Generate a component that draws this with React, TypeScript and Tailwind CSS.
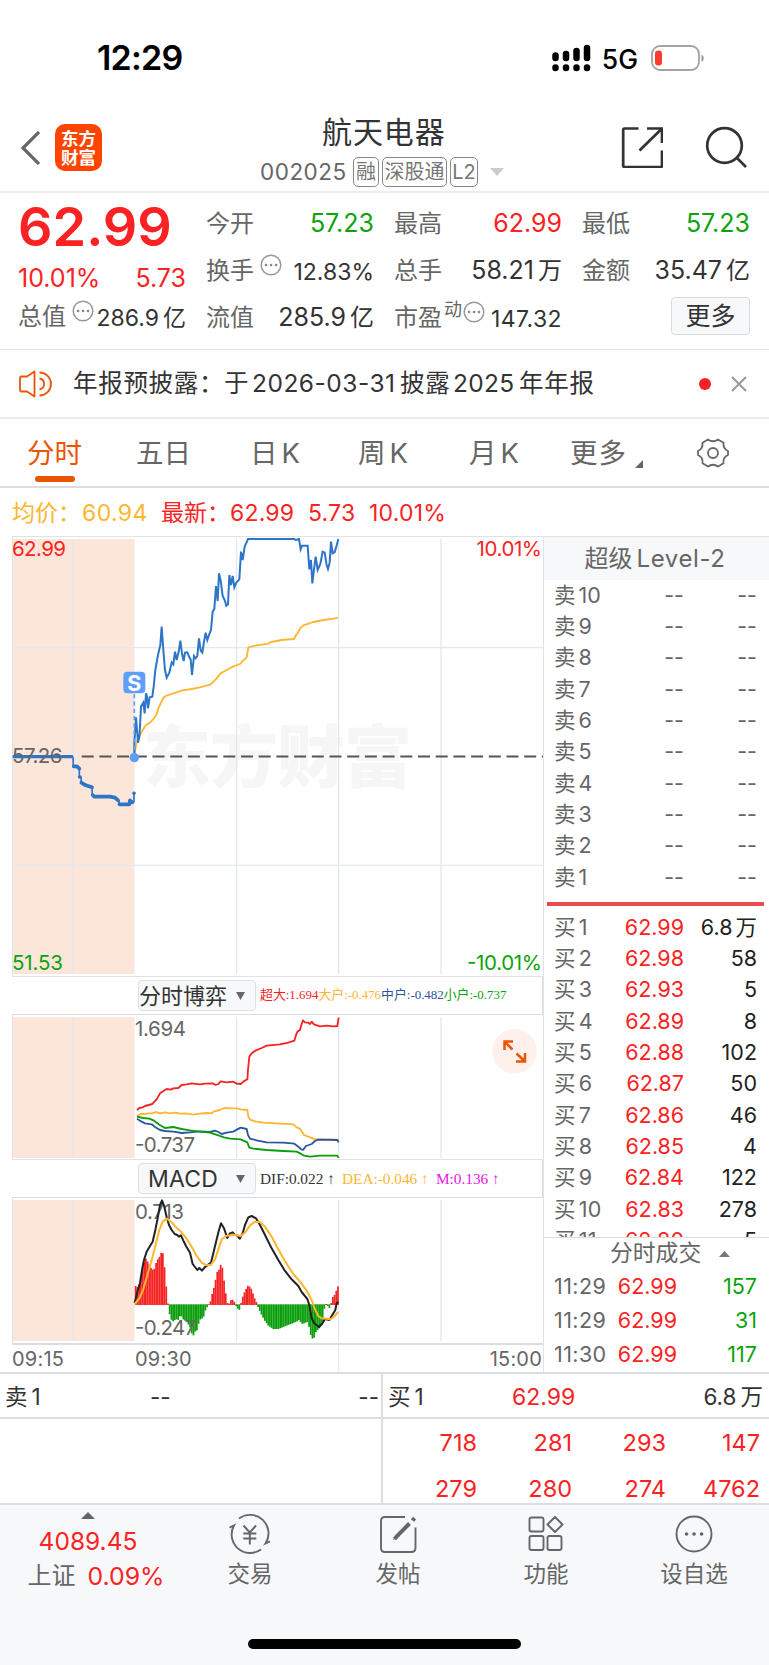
import {ReactNode} from 'react'

const asks = [10, 9, 8, 7, 6, 5, 4, 3, 2, 1];

const bids = [
  ['1', '62.99', '6.8万'],
  ['2', '62.98', '58'],
  ['3', '62.93', '5'],
  ['4', '62.89', '8'],
  ['5', '62.88', '102'],
  ['6', '62.87', '50'],
  ['7', '62.86', '46'],
  ['8', '62.85', '4'],
  ['9', '62.84', '122'],
  ['10', '62.83', '278'],
  ['11', '62.80', '5'],
];

const trades = [
  ['11:29', '62.99', '157'],
  ['11:29', '62.99', '31'],
  ['11:30', '62.99', '117'],
];

const PRICE = '403,680 403,640 408,562 411,600 414,638 418,620 420,590 423,530 430,518 434,550 438,490 441,500 444,535 449,502 457,500 461,470 466,420 474,375 481,345 485,290 490,360 495,420 500,443 508,428 515,397 520,403 525,365 530,390 537,360 541,332 546,370 551,393 555,368 562,367 568,382 572,388 576,435 582,378 587,385 592,378 597,325 602,362 607,368 612,335 617,308 622,330 628,312 633,300 638,245 643,237 648,168 653,213 657,130 662,152 668,198 674,210 679,227 684,223 688,135 693,165 698,138 703,172 709,158 718,148 723,65 728,90 734,50 744,27 882,27 888,30 897,27 902,58 906,47 923,47 928,118 933,90 937,160 942,118 947,80 953,120 961,102 968,65 974,68 980,105 984,117 989,98 993,35 998,70 1004,66 1009,50 1015,27';
const AVERAGE = '403,675 410,635 420,615 430,597 438,585 450,578 462,565 470,553 475,535 482,520 490,504 497,498 520,490 547,481 575,477 600,472 632,463 650,445 662,430 680,420 700,409 720,402 727,394 740,382 745,353 760,348 805,341 812,336 830,333 845,330 882,327 888,315 893,310 900,295 910,286 940,276 970,270 1000,266 1014,263';
const AUCTION = '219,680 220,709 232,712 238,718 238,741 243,742 244,758 255,762 265,769 276,772 277,795 283,800 330,800 345,804 357,812 358,823 388,823 390,810 397,817 402,815 402,790';

const FLOW_XL = '411,420 418,414 428,412 435,408 457,402 470,388 480,370 495,360 500,357 512,359 520,355 535,354 545,345 560,343 575,340 600,343 615,341 638,340 647,345 655,342 662,334 680,337 700,335 710,341 722,342 730,335 742,328 744,300 748,260 755,250 768,241 785,234 800,227 840,223 865,218 883,212 888,195 893,184 900,180 905,162 909,151 915,157 925,158 930,162 935,155 942,163 960,169 980,167 1000,169 1012,168 1016,143';
const FLOW_L = '411,438 425,431 435,433 445,430 457,430 467,426 480,430 495,427 510,430 525,428 540,431 558,430 580,434 600,431 620,429 635,430 642,424 660,420 672,414 690,415 710,415 722,418 742,420 745,440 750,449 765,454 790,458 830,460 880,463 890,472 900,476 912,495 925,500 945,508 980,508 1016,509';
const FLOW_M = '411,446 425,455 435,460 455,463 465,471 480,480 495,483 520,485 545,489 570,487 600,484 630,486 645,482 655,486 665,492 680,488 700,485 712,478 722,473 740,477 744,495 750,506 770,511 800,517 850,518 883,521 895,530 902,537 909,540 918,528 935,522 945,513 955,509 1012,510 1016,517';
const FLOW_S = '411,440 430,444 448,446 462,452 478,464 495,474 520,471 545,477 570,481 600,485 630,488 655,496 672,502 690,506 722,508 742,517 748,533 760,536 800,540 850,543 890,545 902,551 912,557 930,560 960,557 1012,557 1016,563';

const DIF = '404,1000 412,965 420,940 426,900 432,870 440,845 450,828 458,815 466,780 473,745 480,705 486,691 493,710 500,742 507,765 515,780 524,792 532,795 537,800 543,796 550,812 558,828 570,848 578,882 592,900 598,894 606,902 614,892 622,886 633,878 640,850 650,808 657,780 663,760 672,775 682,804 690,790 698,787 704,794 712,797 719,806 728,790 735,765 745,742 755,738 768,745 780,765 795,795 815,835 835,870 855,903 875,928 895,948 905,966 922,987 928,1005 935,1045 943,1060 957,1071 966,1062 975,1047 988,1050 997,1035 1006,1020 1010,1000 1016,996';
const DEA = '404,1002 418,985 430,958 442,915 455,870 468,820 478,780 488,755 500,746 515,757 530,774 545,787 560,806 575,830 590,858 605,878 620,886 633,884 645,868 655,838 665,808 678,798 700,794 722,798 735,788 750,766 765,755 780,756 795,770 815,800 835,838 855,874 880,912 900,935 920,962 935,990 945,1018 955,1038 965,1045 980,1046 992,1048 1004,1038 1014,1026';

// turning points of the histogram, [x, height]
const HIST = [
  [407, 55], [415, 50], [422, 80], [430, 120], [437, 138], [445, 125], [455, 105], [462, 103], [470, 130], [480, 145], [487, 164],
  [492, 130], [497, 75], [502, 15], [507, -18], [512, -42], [520, -50], [527, -42], [535, -45], [542, -28], [548, -42],
  [560, -50], [572, -70], [578, -97], [585, -80], [592, -75], [598, -45], [610, -38], [618, -10], [625, -2], [632, 10],
  [638, 38], [645, 60], [650, 100], [655, 92], [660, 122], [668, 108], [674, 55], [680, 15], [685, -8], [690, 12],
  [700, 14], [706, 1], [711, -9], [720, -16], [725, 15], [735, 40], [745, 58], [755, 45], [763, 20], [770, 5],
  [775, -8], [785, -30], [795, -48], [805, -62], [820, -72], [835, -72], [850, -66], [870, -58], [890, -50], [898, -44],
  [905, -57], [915, -54], [925, -50], [930, -85], [940, -106], [948, -80], [960, -68], [968, -50], [972, -15], [977, 2],
  [983, -3], [988, -10], [992, -3], [997, 20], [1005, 30], [1012, 50], [1018, 62],
];

const bars = Array.from({length: 120}, (_, i) => {
  const x = 407 + i * 5.1;
  const k = Math.max(1, HIST.findIndex((p) => p[0] >= x));
  const [x0, h0] = HIST[k - 1];
  const [x1, h1] = HIST[k];
  return {x, h: h0 + ((h1 - h0) * (x - x0)) / (x1 - x0)};
});

function Label({x, y, w, size = 21, fill = '#666', end, children}: {x: number, y: number, w: number, size?: number, fill?: string, end?: boolean, children: string}) {
  return (
    <text x={x} y={y} fontSize={size} fill={fill} textLength={w} textAnchor={end ? 'end' : 'start'}>{children}</text>
  )
}

function Dots({className}: {className?: string}) {
  return (
    <svg viewBox="0 0 22 22" className={'h-[22px] w-[22px] shrink-0 ' + className} fill="none">
      <circle cx="11" cy="11" r="9.8" stroke="#999" strokeWidth="1.5"/>
      <path d="M6 11h.1M11 11h.1M16 11h.1" stroke="#888" strokeWidth="2.6" strokeLinecap="round"/>
    </svg>
  )
}

function Badge({className, children}: {className: string, children: ReactNode}) {
  return (
    <span className={'flex h-[30px] items-center justify-center rounded-[5px] border-[1.5px] border-[#888] text-[20px] leading-none whitespace-nowrap text-[#777] ' + className}>{children}</span>
  )
}

function Cell({label, value, unit, color = 'text-[#333]', children}: {label: string, value: string, unit?: string, color?: string, children?: ReactNode}) {
  return (
    <div className="flex h-[47px] w-[168px] items-center">
      <span className="text-[24px] text-[#666]">{label}</span>
      {children}
      <span className={'ml-auto whitespace-nowrap ' + color}>{value}{unit && <span className="ml-[4px] text-[24px]">{unit}</span>}</span>
    </div>
  )
}

function BidRow({row}: {row: string[]}) {
  return (
    <div className="flex h-[31.3px] shrink-0 items-center">
      <span className="w-[60px] tracking-[0.2px] text-[#666]">买<span className="ml-[3px]">{row[0]}</span></span>
      <span className="w-[70px] text-right text-[#fa2222]">{row[1]}</span>
      <span className="ml-auto text-[#222]">{row[2].replace('万', '')}{row[2].endsWith('万') && <span className="ml-[3px]">万</span>}</span>
    </div>
  )
}

function Plot({y, children}: {y: number, children: ReactNode}) {
  return (
    <g transform={`translate(0 ${y}) scale(.33333)`} fill="none" strokeLinejoin="round">{children}</g>
  )
}

function PriceChart() {
  return (
    <svg viewBox="12 536 531 441" className="block h-[441px] w-[531px]">
      <rect x="12.5" y="539" width="122" height="435" fill="#fce6da"/>
      <text x="143" y="782" fontSize="68" fontWeight="900" fill="#f6f6f6" textLength="269">东方财富</text>
      <path d="M73 539V974M236.6 539V974M338.6 539V974M441 539V974M12 647.7H543M12 865.4H543" stroke="#e3e7ef" strokeWidth="1.3"/>
      <path d="M12 536.5H544M12 976.5H544M12.5 536V977" stroke="#dfe3e8"/>
      <Label x={12} y={556} w={54} size={20.5} fill="#fa2222">62.99</Label>
      <Label x={542} y={556} w={65.5} size={20.5} fill="#fa2222" end>10.01%</Label>
      <Label x={12} y={969.5} w={51} size={20.5} fill="#0ba30b">51.53</Label>
      <Label x={542} y={969.5} w={75} size={20.5} fill="#0ba30b" end>-10.01%</Label>
      <path d="M81.7 756.5H544" stroke="#555" strokeWidth="1.8" strokeDasharray="12 5.7"/>
      <Plot y={530}>
        <path d="M38 680H219" stroke="#2e75c8" strokeWidth="10"/>
        <polyline points={AUCTION} stroke="#2e75c8" strokeWidth="5"/>
        <path d="M221 709H231L238 716M239 741h1M244 758L255 765L276 772M278 795L283 800H330L345 803L354 811M358 823H388L390 811L397 817M402 790h.1" stroke="#2e75c8" strokeWidth="11" strokeLinecap="round"/>
        <polyline points={AVERAGE} stroke="#fdb62f" strokeWidth="5.5"/>
        <polyline points={PRICE} stroke="#2e75c8" strokeWidth="6" strokeLinejoin="miter"/>
        <path d="M403 492V680" stroke="#5b9df8" strokeWidth="5" strokeDasharray="13 9"/>
        <rect x="370" y="425" width="66" height="65" rx="12" fill="#5e9ffa"/>
        <circle cx="403" cy="683" r="14" fill="#5e9ffa"/>
      </Plot>
      <text x="134.3" y="690.5" fontSize="21.5" fontWeight="700" fill="#fff" textAnchor="middle">S</text>
      <Label x={12} y={763} w={50.5} size={20.5}>57.26</Label>
    </svg>
  )
}

function FlowChart() {
  return (
    <svg viewBox="12 1015 531 145" className="block h-[145px] w-[531px]">
      <rect x="12.5" y="1017" width="122" height="141" fill="#fce6da"/>
      <path d="M73 1017V1158M236.6 1017V1158M338.6 1017V1158M441 1017V1158" stroke="#e0e5ee" strokeWidth="1.2"/>
      <path d="M12 1159.5H544M12.5 1015V1160" stroke="#dfe3e8"/>
      <Label x={135} y={1036} w={51} size={20.5}>1.694</Label>
      <Label x={135} y={1152} w={60} size={20.5}>-0.737</Label>
      <Plot y={970}>
        <polyline points={FLOW_XL} stroke="#f52323" strokeWidth="5.5"/>
        <polyline points={FLOW_L} stroke="#fdb62f" strokeWidth="5.5"/>
        <polyline points={FLOW_M} stroke="#2a559f" strokeWidth="5.5"/>
        <polyline points={FLOW_S} stroke="#0a9e0a" strokeWidth="5.5"/>
      </Plot>
      <circle cx="514.5" cy="1051.3" r="22.3" fill="#fef1eb"/>
      <path d="M504.5 1050V1041.5H513M504.5 1041.5L512.5 1049.5M525 1053V1061.5H516M525 1061.5L516.5 1053.5" stroke="#ea5504" strokeWidth="2.5" fill="none"/>
    </svg>
  )
}

function MacdChart() {
  return (
    <svg viewBox="12 1198 531 145" className="block h-[145px] w-[531px]">
      <rect x="12.5" y="1200" width="122" height="141" fill="#fce6da"/>
      <path d="M73 1200V1341M236.6 1200V1341M338.6 1200V1341M441 1200V1341" stroke="#e0e5ee" strokeWidth="1.2"/>
      <path d="M12.5 1198V1343" stroke="#dfe3e8"/>
      <Plot y={970}>
        {bars.map((b) => (
          <rect key={b.x} x={b.x - 2.6} y={b.h > 0 ? 1003 - b.h : 1003} width="5.2" height={Math.abs(b.h) + 2} fill={b.h > 0 ? '#f52323' : '#0a9e0a'}/>
        ))}
      </Plot>
      <Label x={135} y={1219} w={49} size={20.5}>0.713</Label>
      <Label x={135} y={1335} w={61} size={20.5}>-0.247</Label>
      <Plot y={970}>
        <polyline points={DIF} stroke="#222" strokeWidth="6"/>
        <polyline points={DEA} stroke="#fdb62f" strokeWidth="6"/>
      </Plot>
    </svg>
  )
}

function IndicatorBar({name, children}: {name: ReactNode, children: ReactNode}) {
  return (
    <div className="flex h-[38px] items-center border-r border-b border-[#d8dce4] pl-[126px]">
      <div className="flex h-[31px] w-[118px] shrink-0 items-center rounded-[4px] border border-[#dcdfe6] bg-[#f7f8fa] text-[#333]">
        <span className="flex-1 whitespace-nowrap">{name}</span>
        <svg viewBox="0 0 9 8" className="mr-[10px] h-[8px] w-[9px]"><path d="M0 0H9L4.5 8Z" fill="#666"/></svg>
      </div>
      <div className="ml-[4px] flex font-['Liberation_Serif','Noto_Sans_CJK_SC',serif] whitespace-nowrap">{children}</div>
    </div>
  )
}

function NavItem({label, children}: {label: string, children: ReactNode}) {
  return (
    <div className="flex w-[148px] flex-col items-center pt-[8px]">
      <svg viewBox="0 0 42 42" className="h-[42px] w-[42px]" fill="none" stroke="#666" strokeWidth="1.9">{children}</svg>
      <span className="mt-[7px] text-[22.5px] leading-[24px] text-[#666]">{label}</span>
    </div>
  )
}

export default function App() {
  return (
    <div className="flex h-[1665px] w-[769px] flex-col overflow-hidden bg-white font-['Inter','Noto_Sans_CJK_SC',sans-serif] text-[24px] leading-none text-[#333]">
      {/* status bar */}
      <div className="flex h-[96px] items-center pt-[20px] pl-[97px] text-black">
        <span className="text-[34px] font-semibold tracking-[-0.8px]">12:29</span>
        <svg viewBox="0 0 40 28" className="ml-auto h-[28px] w-[40px]">
          <path d="M3.5 11.5V14M14 10V14M24.5 7V14M35 4V14" stroke="#000" strokeWidth="6.5" strokeLinecap="round"/>
          <path d="M3.5 23.5V24M14 23.5V24M24.5 23.5V24M35 23.5V24" stroke="#000" strokeWidth="6.5" strokeLinecap="round"/>
        </svg>
        <span className="mt-[2px] ml-[10px] text-[26.5px] font-medium">5G</span>
        <svg viewBox="0 0 54 26" className="mr-[64px] ml-[13px] h-[26px] w-[54px]">
          <rect x="1" y="1" width="47" height="24" rx="8" fill="none" stroke="#a3a3a3" strokeWidth="1.8"/>
          <rect x="4" y="5.5" width="7" height="15" rx="3.2" fill="#ff3b30"/>
          <path d="M50.5 9.5C53.5 11 53.5 15.5 50.5 17Z" fill="#999"/>
        </svg>
      </div>

      {/* title */}
      <div className="flex h-[97px] shrink-0 border-b-2 border-[#ececec]">
        <svg viewBox="0 0 20 34" className="mt-[35px] ml-[20px] h-[34px] w-[20px]"><path d="M19 1L3 17L19 33" stroke="#666" strokeWidth="3.2" fill="none"/></svg>
        <div className="mt-[28px] ml-[15px] flex h-[47px] w-[47px] flex-col items-center justify-center rounded-[10px] bg-[#ff4400] text-[17.5px] leading-[19px] font-bold text-white">
          <span>东方</span>
          <span>财富</span>
        </div>
        <div className="flex w-[519px] flex-col pl-[158px]">
          <span className="mt-[19px] ml-[62px] text-[30px] leading-[34px] tracking-[0.9px]">航天电器</span>
          <div className="mt-[8px] flex items-center">
            <span className="w-[93px] text-[22.5px] tracking-[0.5px] text-[#666]">002025</span>
            <div className="flex gap-[3px]">
              <Badge className="w-[26px]">融</Badge>
              <Badge className="w-[65px]">深股通</Badge>
              <Badge className="w-[28px]">L2</Badge>
            </div>
            <svg viewBox="0 0 14 8" className="ml-[12px] h-[8px] w-[14px]"><path d="M0 0H14L7 8Z" fill="#ccc"/></svg>
          </div>
        </div>
        <svg viewBox="0 0 42 42" className="mt-[30px] h-[42px] w-[42px]" fill="none" stroke="#333" strokeWidth="2.7">
          <path d="M17.500 2.500H3.500Q2.200 2.500 2.200 4V39.500Q2.200 41 3.500 41H39.500Q41 41 41 39.500V24.500M26 2.500H41V17M40.500 3L18.500 24.500"/>
        </svg>
        <svg viewBox="0 0 42 42" className="mt-[30px] ml-[42px] h-[42px] w-[42px]" fill="none" stroke="#333" strokeWidth="2.7">
          <circle cx="19.5" cy="19.5" r="17.3"/>
          <path d="M32 32L41 41"/>
        </svg>
      </div>

      {/* quote */}
      <div className="flex h-[157px] shrink-0 border-b border-[#e2e3e6] pl-[18px]">
        <div className="flex w-[168px] flex-col">
          <span className="mt-[7px] text-[54px] leading-[54px] font-semibold text-[#fa2222]">62.99</span>
          <div className="mt-[10px] flex h-[28px] items-center justify-between text-[25px] text-[#fa2222]">
            <span>10.01%</span>
            <span>5.73</span>
          </div>
          <div className="mt-[1px] flex h-[47px] items-center whitespace-nowrap">
            <span className="text-[#666]">总值</span>
            <Dots className="mb-3 ml-[6px]"/>
            <span className="mt-[3px] ml-auto text-[23px]">286.9<span className="ml-1">亿</span></span>
          </div>
        </div>
        <div className="ml-[20px] grid grid-cols-[168px_168px_168px] content-start gap-x-[20px] pt-[7px] text-[25px]">
          <Cell label="今开" value="57.23" color="text-[#0ba30b]"/>
          <Cell label="最高" value="62.99" color="text-[#fa2222]"/>
          <Cell label="最低" value="57.23" color="text-[#0ba30b]"/>
          <Cell label="换手" value="12.83%" color="mt-[3px] text-[23px]"><Dots className="mb-3 ml-[6px]"/></Cell>
          <Cell label="总手" value="58.21" unit="万"/>
          <Cell label="金额" value="35.47" unit="亿"/>
          <Cell label="流值" value="285.9" unit="亿"/>
          <Cell label="市盈" value="147.32" color="mt-[3px] text-[23px] tracking-[0.4px]">
            <span className="mb-4 ml-0.5 text-[18px] text-[#666]">动</span>
            <Dots className="mb-3 ml-[1px]"/>
          </Cell>
          <div className="flex h-[44px] items-center justify-end">
            <span className="flex h-[38px] w-[79px] items-center justify-center rounded-[4px] border border-[#d8dbe2] bg-[#f7f8fa]">更多</span>
          </div>
        </div>
      </div>

      {/* notice */}
      <div className="flex h-[69px] shrink-0 items-center border-b-2 border-[#ececee] pl-[19px] text-[24.5px] whitespace-nowrap">
        <svg viewBox="0 0 33 28" className="h-[28px] w-[33px]" fill="none" stroke="#ea5504" strokeWidth="1.8">
          <path d="M15.500 1.500V26.500L8 21.500H2.500Q1 21.500 1 20V8Q1 6.500 2.500 6.500H8Z" strokeLinejoin="round"/>
          <path d="M20.500 2.500A11.500 11.500 0 0 1 20.500 25.500M20.500 8.500A5.600 5.600 0 0 1 20.500 19.500"/>
        </svg>
        <span className="ml-[21px] w-[151px] tracking-[0.7px]">年报预披露：</span>
        <span className="w-[28px]">于</span>
        <span className="w-[148px] tracking-[0.5px]">2026-03-31</span>
        <span className="w-[53px] tracking-[0.7px]">披露</span>
        <span className="w-[66px] tracking-[0.3px]">2025</span>
        <span className="w-[180px] tracking-[0.7px]">年年报</span>
        <span className="h-[12px] w-[12px] rounded-full bg-[#fa2222]"/>
        <svg viewBox="0 0 16 16" className="ml-[20px] h-[16px] w-[16px]"><path d="M1 1L15 15M15 1L1 15" stroke="#999" strokeWidth="2"/></svg>
      </div>

      {/* tabs */}
      <div className="flex h-[69px] shrink-0 border-b-2 border-[#dadde4] pl-[27px] text-[27.5px] leading-[69px] whitespace-nowrap text-[#666]">
        <div className="flex w-[109px] flex-col text-[#ea5504]">
          <span className="h-[57px]">分时</span>
          <span className="ml-[8px] h-[6px] w-[40px] rounded-full bg-[#ea5504]"/>
        </div>
        <span className="w-[114px]">五日</span>
        <span className="w-[108px]">日<span className="ml-1">K</span></span>
        <span className="w-[111px]">周<span className="ml-1">K</span></span>
        <span className="w-[101px]">月<span className="ml-1">K</span></span>
        <span className="w-[65px] tracking-[0.9px]">更多</span>
        <svg viewBox="0 0 8 8" className="mt-[41px] h-[8px] w-[8px]"><path d="M8 0V8H0Z" fill="#666"/></svg>
        <svg viewBox="0 0 32 30" className="mt-[19px] ml-[54px] h-[30px] w-[32px]" fill="none" stroke="#666" strokeWidth="1.8" strokeLinejoin="round">
          <path d="M11 1.500Q16 5 21 1.500L26.500 4.700Q25.800 10.800 31 13V17Q25.800 19.200 26.500 25.300L21 28.500Q16 25 11 28.500L5.500 25.300Q6.200 19.200 1 17V13Q6.200 10.800 5.500 4.700Z"/>
          <circle cx="16" cy="15" r="5"/>
        </svg>
      </div>

      <div className="flex h-[48px] shrink-0 items-center pt-[2px] pl-[12px] text-[23px] whitespace-nowrap text-[#fa2222]">
        <span className="w-[70px] text-[#fdb62f]">均价：</span>
        <span className="w-[79px] tracking-[0.4px] text-[#fdb62f]">60.94</span>
        <span className="w-[69px]">最新：</span>
        <span className="w-[78px] tracking-[0.2px]">62.99</span>
        <span className="w-[61px] tracking-[0.2px]">5.73</span>
        <span className="tracking-[0.2px]">10.01%</span>
      </div>

      {/* charts and order book */}
      <div className="flex h-[836px] shrink-0">
        <div className="ml-[12px] flex w-[531px] flex-col">
          <PriceChart/>
          <IndicatorBar name={<span className="text-[22px]">分时博弈</span>}>
            <div className="flex text-[12.9px]">
              <span className="text-[#f52323]">超大:1.694</span>
              <span className="text-[#fdb62f]">大户:-0.476</span>
              <span className="text-[#2a559f]">中户:-0.482</span>
              <span className="text-[#0ba30b]">小户:-0.737</span>
            </div>
          </IndicatorBar>
          <FlowChart/>
          <IndicatorBar name={<span className="pl-[9px] text-[23px] tracking-[0.2px]">MACD</span>}>
            <div className="flex text-[15.3px]">
              <span className="w-[82px]">DIF:0.022 ↑</span>
              <span className="w-[94px] text-[#fdb62f]">DEA:-0.046 ↑</span>
              <span className="text-[#e815e8]">M:0.136 ↑</span>
            </div>
          </IndicatorBar>
          <MacdChart/>
          <div className="flex h-[29px] items-center border-t-2 border-[#dadde4] text-[20px] tracking-[0.2px] text-[#666]">
            <span className="w-[123px]">09:15</span>
            <span className="flex h-full w-[204px] items-center border-r border-[#e3e7ef]">09:30</span>
            <span className="ml-auto pr-[1px]">15:00</span>
          </div>
        </div>

        <div className="flex w-[226px] flex-col border-l border-[#dfe3e8] text-[21.5px]">
          <div className="flex h-[44px] shrink-0 items-center justify-center border-t border-[#dfe3e8] bg-[#f7f8fa] pr-[3px] text-[24px] text-[#666]">
            <span>超级</span>
            <span className="ml-1 tracking-[0.6px]">Level-2</span>
          </div>
          <div className="flex h-[657px] flex-col overflow-hidden pr-[12px] pl-[10px]">
            {asks.map((n) => (
              <div key={n} className="flex h-[31.3px] shrink-0 items-center text-[#666]">
                <span className="w-[60px]">卖<span className="ml-[3px]">{n}</span></span>
                <span className="w-[70px] text-right">--</span>
                <span className="ml-auto">--</span>
              </div>
            ))}
            <div className="mt-[9px] -mr-[7px] mb-[6px] -ml-[7px] h-[4px] shrink-0 bg-[#eb4b4b]"/>
            {bids.map((row) => <BidRow key={row[0]} row={row}/>)}
          </div>
          <div className="flex h-[135px] flex-col border-t border-[#dadde4] pr-[12px] pl-[10px]">
            <div className="flex h-[32px] items-center pl-[56px] text-[22.8px] text-[#666]">
              <span>分时成交</span>
              <svg viewBox="0 0 11 6" className="ml-[18px] h-[6px] w-[11px]"><path d="M0 6H11L5.500 0Z" fill="#777"/></svg>
            </div>
            {trades.map(([time, price, vol], i) => (
              <div key={i} className="flex h-[34.5px] items-center">
                <span className="w-[60px] tracking-[0.4px] text-[#666]">{time}</span>
                <span className="w-[63px] text-right text-[#fa2222]">{price}</span>
                <span className="ml-auto text-[#0ba30b]">{vol}</span>
              </div>
            ))}
          </div>
        </div>
      </div>

      {/* best bid / ask */}
      <div className="flex h-[131px] shrink-0 border-t-2 border-[#dadde4] text-[22.5px]">
        <div className="w-[383px] border-r-2 border-[#dadde4]">
          <div className="flex h-[45px] items-center border-b-2 border-[#dadde4] pt-[4px] pl-[5px]">
            <span className="w-[145px]">卖<span className="ml-1">1</span></span>
            <span>--</span>
            <span className="ml-auto pr-[2px]">--</span>
          </div>
        </div>
        <div className="flex-1">
          <div className="flex h-[45px] items-center border-b-2 border-[#dadde4] pt-[4px] pr-[6px] pl-[5px]">
            <span className="w-[124px]">买<span className="ml-1">1</span></span>
            <span className="text-[23px] text-[#fa2222]">62.99</span>
            <span className="ml-auto">6.8<span className="ml-1">万</span></span>
          </div>
          <div className="mt-[1px] grid grid-cols-[94px_95px_94px_94px] text-right text-[23.5px] leading-[45.5px] text-[#fa2222]">
            <span>718</span>
            <span>281</span>
            <span>293</span>
            <span>147</span>
            <span>279</span>
            <span>280</span>
            <span>274</span>
            <span>4762</span>
          </div>
        </div>
      </div>

      {/* bottom nav */}
      <div className="flex flex-1 flex-col border-t-2 border-[#dadde4] bg-[#f7f8fa]">
        <div className="flex h-[134px]">
          <div className="flex w-[176px] flex-col items-center">
            <svg viewBox="0 0 14 7" className="mt-[7px] h-[7px] w-[14px]"><path d="M0 7H14L7 0Z" fill="#666"/></svg>
            <span className="mt-[10px] text-[24.5px] text-[#fa2222]">4089.45</span>
            <div className="mt-[10px] ml-[16px] flex items-center gap-[12px]">
              <span className="text-[#666]">上证</span>
              <span className="text-[24.8px] text-[#fa2222]">0.09%</span>
            </div>
          </div>
          <NavItem label="交易">
            <path d="M10 5.500A18.500 18.500 0 0 1 36.500 30.500L41 28.300M32 36.500A18.500 18.500 0 0 1 5 12.500L.5 14.700"/>
            <path d="M14.500 12.500L20.800 19.500L27 12.500M20.800 19.500V31.500M14.300 20.500H27.300M14.300 25.500H27.300"/>
          </NavItem>
          <NavItem label="发帖">
            <path d="M28 4H8Q4 4 4 8V35Q4 39 8 39H34Q38.500 39 38.500 35V14.500"/>
            <path d="M37.500 5L35.500 7.500M32.500 10.500L21 22L17.500 26" strokeWidth="4"/>
            <path d="M21 20L15.500 27.500L23 23Z" fill="#666" stroke="none"/>
          </NavItem>
          <NavItem label="功能">
            <rect x="4.500" y="4.500" width="14" height="14" rx="2"/>
            <rect x="4.500" y="23" width="14" height="14" rx="2"/>
            <rect x="22.500" y="23" width="14" height="14" rx="2"/>
            <path d="M30 4L37.500 11.500L30 19L22.500 11.500Z" strokeLinejoin="round"/>
          </NavItem>
          <NavItem label="设自选">
            <circle cx="21" cy="21" r="17.500"/>
            <path d="M13.500 21h.1M21 21h.1M28.500 21h.1" strokeWidth="3.600" strokeLinecap="round"/>
          </NavItem>
        </div>
        <div className="mx-auto h-[10px] w-[273px] rounded-full bg-black"/>
      </div>
    </div>
  )
}
